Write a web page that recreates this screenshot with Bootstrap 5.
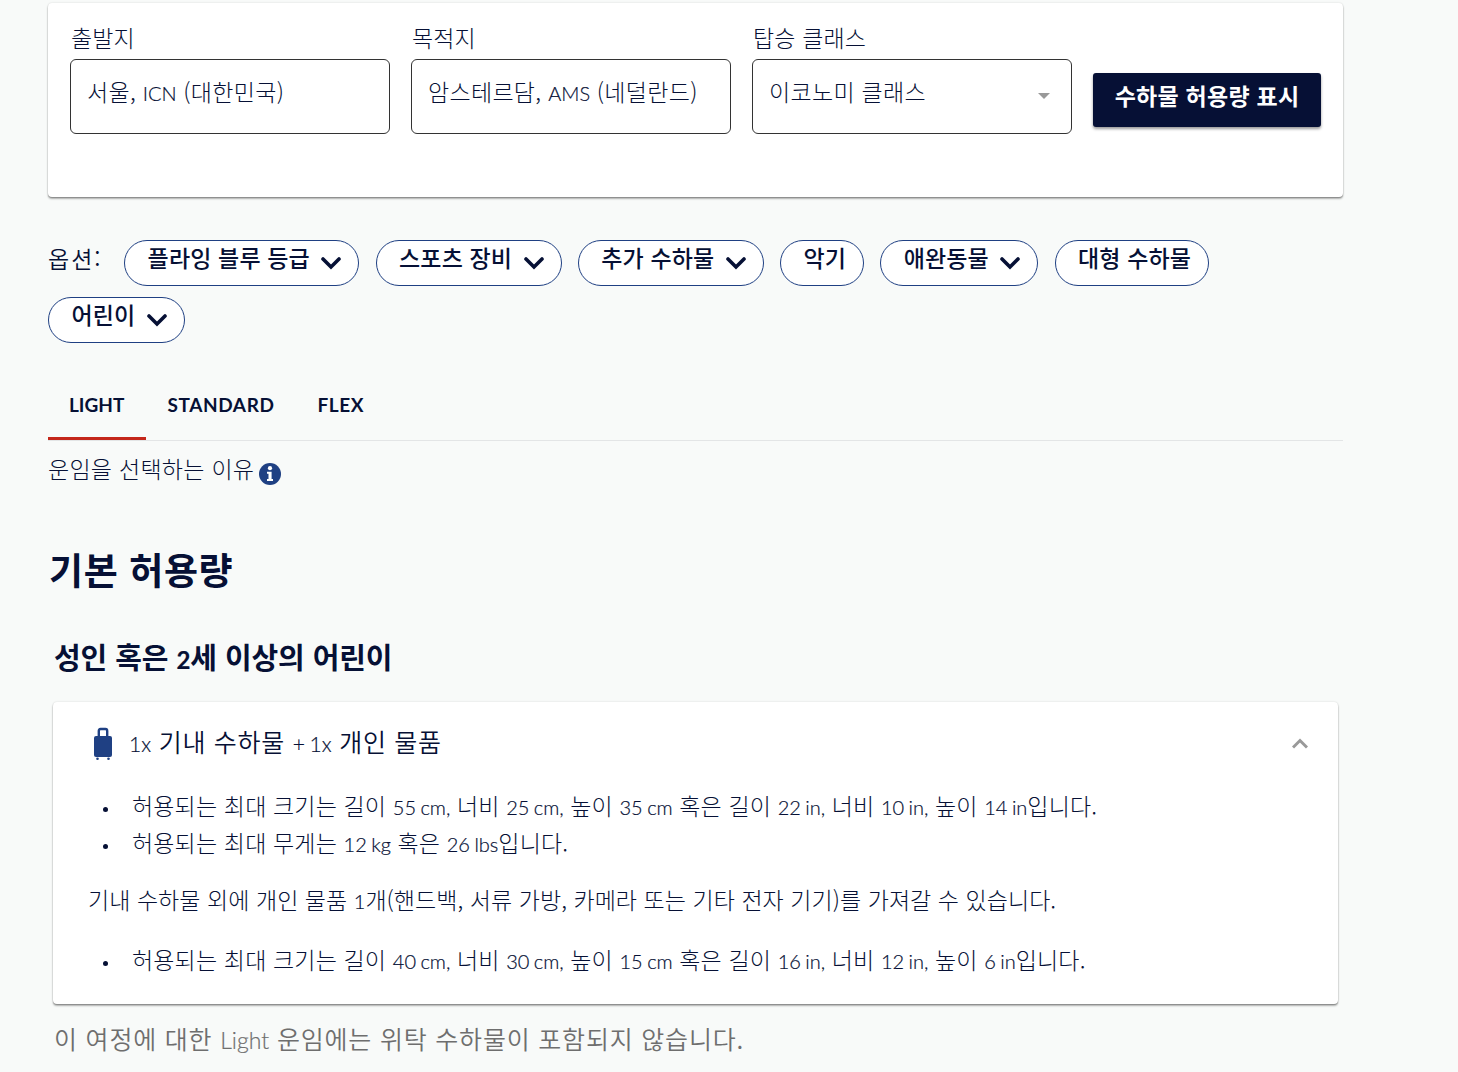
<!DOCTYPE html>
<html lang="ko">
<head>
  <meta charset="UTF-8">
  <title>수하물 허용량</title>
  <meta name="viewport" content="width=device-width, initial-scale=1">
  <link href="https://cdn.jsdelivr.net/npm/bootstrap@5.3.0/dist/css/bootstrap.min.css" rel="stylesheet">
  <style>
    body { background: #f8faf9; color: #061035; font-family: "Noto Sans CJK KR", sans-serif; font-weight: 300; font-size: 23px; line-height: 36px; letter-spacing: .15px; height: 1072px; overflow: hidden; }
    .page { width: 1295px; margin-left: 48px; padding-top: 3px; }
    .en { font-family: Lato, sans-serif; font-size: 20px; font-weight: 300; line-height: 1; letter-spacing: 0; word-spacing: -1px; -webkit-text-stroke: .2px currentColor; }
    .panel { background: #fff; border: 0; border-radius: 4px; box-shadow: 0 2px 2px rgba(0,0,0,.28), 0 1px 1px rgba(0,0,0,.2), 0 0 2px rgba(0,0,0,.15); }
    .search { height: 194px; padding: 17px 22px 0; gap: 21px; }
    .field { width: 320px; }
    .field label { line-height: 34px; padding-left: 1px; }
    .box { height: 75px; margin-top: 5px; border: 1px solid #333; border-radius: 6px; padding: 13px 17px 0 16px; line-height: 36px; letter-spacing: .3px; }
    .caret { border: 6.5px solid transparent; border-top-color: #999; border-bottom: 0; margin: 20px 4px 0 0; width: 0; height: 0; }
    .btn-show { width: 228px; height: 54px; margin-top: 53px; padding: 3px 0 0; border-radius: 3px; background: #061035; color: #fff; font-weight: 700; font-size: 23px; line-height: 36px; letter-spacing: .25px; box-shadow: 0 2px 3px rgba(0,0,0,.4); }
    .options { margin-top: 43px; gap: 11px 16.2px; line-height: 36px; }
    .options-label { width: 60px; font-weight: 350; letter-spacing: 2px; }
    .pill { height: 46px; border: 1px solid #1f4083; border-radius: 23px; background: #fff; padding: 1px 17px 0 22.4px; font-weight: 500; line-height: 31px; letter-spacing: .15px; gap: 11.5px; }
    .pill svg { margin-top: 8.5px; }
    .fare-tabs { height: 69px; margin-top: 29px; border-bottom: 1px solid #e3e5e6; font-family: Lato, sans-serif; font-weight: 700; font-size: 19px; }
    .fare-tab { height: 68px; padding: 15px 21.5px 0; letter-spacing: .6px; }
    .fare-tab.active { width: 98px; padding: 15px 0 0 21px; letter-spacing: 0; border-bottom: 3px solid #c4271b; }
    .why { margin-top: 9px; gap: 5px; letter-spacing: .27px; }
    .why svg { margin-top: 12px; }
    h1 { font-size: 37px; font-weight: 700; line-height: 50px; letter-spacing: .6px; margin: 58px 0 0 1px; }
    h2 { font-size: 29px; font-weight: 700; line-height: 40px; letter-spacing: -.1px; margin: 42px 0 0 6px; }
    h2 .en { font-size: 24px; font-weight: 700; }
    .allow { margin: 26px 5px 0; height: 302px; padding: 22px 30px 0 36px; }
    .allow-title { height: 36px; font-size: 25px; font-weight: 350; letter-spacing: .7px; gap: 16px; }
    .allow-title > span { margin-top: -2px; }
    .allow-title svg { margin-top: 3px; }
    .allow-title .en { font-size: 21px; }
    .allow ul { padding-left: 42px; margin: 27px 0 0; list-style: none; }
    .allow li { line-height: 37px; }
    .allow li::before { content: ""; display: inline-block; width: 5px; height: 5px; margin: 0 24px 3px -28px; border-radius: 50%; background: #061035; }
    .allow .extra { margin: 20px 0 0 -1px; letter-spacing: .05px; }
    .allow .extra + ul { margin-top: 24px; }
    .note { margin: 16px 0 0 6px; color: #6e6e6e; font-size: 25px; font-weight: 350; letter-spacing: .8px; }
    .note .en { font-size: 23px; }
  </style>
</head>
<body>
  <div class="page">
    <form class="panel search d-flex">
      <div class="field">
        <label class="d-block">출발지</label>
        <div class="box">서울, <span class="en">ICN</span> (대한민국)</div>
      </div>
      <div class="field">
        <label class="d-block">목적지</label>
        <div class="box">암스테르담, <span class="en">AMS</span> (네덜란드)</div>
      </div>
      <div class="field">
        <label class="d-block">탑승 클래스</label>
        <div class="box d-flex justify-content-between">이코노미 클래스<span class="caret"></span></div>
      </div>
      <button type="button" class="btn btn-show d-flex justify-content-center">수하물 허용량 표시</button>
    </form>

    <div class="options d-flex flex-wrap">
      <span class="options-label">옵션:</span>
      <span class="pill d-flex">플라잉 블루 등급<svg width="20" height="24" viewBox="0 0 20 24"><path d="M2 8l8 8 8-8" fill="none" stroke="#061035" stroke-width="3.6" stroke-linecap="round"/></svg></span>
      <span class="pill d-flex">스포츠 장비<svg width="20" height="24" viewBox="0 0 20 24"><path d="M2 8l8 8 8-8" fill="none" stroke="#061035" stroke-width="3.6" stroke-linecap="round"/></svg></span>
      <span class="pill d-flex">추가 수하물<svg width="20" height="24" viewBox="0 0 20 24"><path d="M2 8l8 8 8-8" fill="none" stroke="#061035" stroke-width="3.6" stroke-linecap="round"/></svg></span>
      <span class="pill">악기</span>
      <span class="pill d-flex">애완동물<svg width="20" height="24" viewBox="0 0 20 24"><path d="M2 8l8 8 8-8" fill="none" stroke="#061035" stroke-width="3.6" stroke-linecap="round"/></svg></span>
      <span class="pill">대형 수하물</span>
      <span class="pill d-flex">어린이<svg width="20" height="24" viewBox="0 0 20 24"><path d="M2 8l8 8 8-8" fill="none" stroke="#061035" stroke-width="3.6" stroke-linecap="round"/></svg></span>
    </div>

    <div class="fare-tabs d-flex">
      <div class="fare-tab active">LIGHT</div>
      <div class="fare-tab">STANDARD</div>
      <div class="fare-tab">FLEX</div>
    </div>

    <div class="why d-flex align-items-center">
      <span>운임을 선택하는 이유</span>
      <svg width="22" height="22" viewBox="0 0 22 22"><circle cx="11" cy="11" r="11" fill="#1f4083"/><circle cx="11" cy="5.2" r="2.1" fill="#fff"/><path d="M8 8.7h4.6v7.2H14v2H8v-2h1.5v-5.2H8z" fill="#fff"/></svg>
    </div>

    <h1>기본 허용량</h1>
    <h2>성인 혹은 <span class="en">2</span>세 이상의 어린이</h2>

    <div class="panel allow">
      <div class="allow-title d-flex align-items-center">
        <svg class="ms-1" width="20" height="34" viewBox="0 0 20 34"><path d="M5.8 9V4Q5.8 2 7.5 2h5Q14.2 2 14.2 4v5" fill="none" stroke="#1f4083" stroke-width="2.4"/><rect x="1" y="9" width="18" height="21" rx="2" fill="#1f4083"/><circle cx="4.5" cy="31.8" r="1.3" fill="#1f4083"/><circle cx="15.5" cy="31.8" r="1.3" fill="#1f4083"/></svg>
        <span><span class="en">1x</span> 기내 수하물 <span class="en">+ 1x</span> 개인 물품</span>
        <svg class="ms-auto" width="16" height="12" viewBox="0 0 16 12"><path d="M1 9.5l7-7 7 7" fill="none" stroke="#999" stroke-width="3"/></svg>
      </div>
      <ul>
        <li>허용되는 최대 크기는 길이 <span class="en">55 cm,</span> 너비 <span class="en">25 cm,</span> 높이 <span class="en">35 cm</span> 혹은 길이 <span class="en">22 in,</span> 너비 <span class="en">10 in,</span> 높이 <span class="en">14 in</span>입니다.</li>
        <li>허용되는 최대 무게는 <span class="en">12 kg</span> 혹은 <span class="en">26 lbs</span>입니다.</li>
      </ul>
      <p class="extra">기내 수하물 외에 개인 물품 <span class="en">1</span>개(핸드백, 서류 가방, 카메라 또는 기타 전자 기기)를 가져갈 수 있습니다.</p>
      <ul>
        <li>허용되는 최대 크기는 길이 <span class="en">40 cm,</span> 너비 <span class="en">30 cm,</span> 높이 <span class="en">15 cm</span> 혹은 길이 <span class="en">16 in,</span> 너비 <span class="en">12 in,</span> 높이 <span class="en">6 in</span>입니다.</li>
      </ul>
    </div>
    <p class="note">이 여정에 대한 <span class="en">Light</span> 운임에는 위탁 수하물이 포함되지 않습니다.</p>
  </div>
  <script src="https://cdn.jsdelivr.net/npm/bootstrap@5.3.0/dist/js/bootstrap.bundle.min.js"></script>
</body>
</html>
